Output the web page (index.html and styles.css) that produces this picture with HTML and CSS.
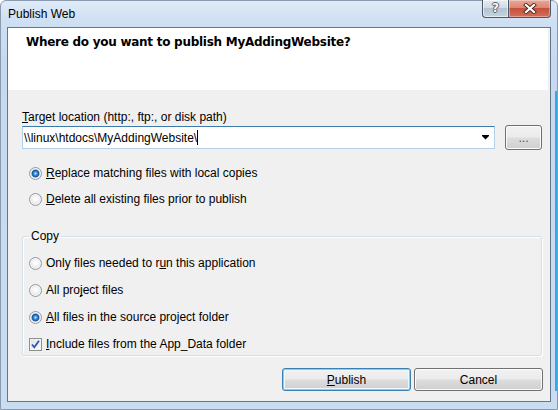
FILE: index.html
```html
<!DOCTYPE html>
<html lang="en">
<head>
<meta charset="utf-8">
<title>Publish Web</title>
<link rel="stylesheet" href="styles.css">
</head>
<body>
<div class="window">
  <div class="titlebar">
    <span class="title">Publish Web</span>
    <div class="caption-buttons">
      <div class="cb help"><span class="help-glyph">?</span></div>
      <div class="cb close">
        <svg width="14" height="11" viewBox="0 0 14 11">
          <path d="M3 2 L11 9 M11 2 L3 9" stroke="#4a2a24" stroke-width="4" stroke-linecap="square" fill="none"/>
          <path d="M3 2 L11 9 M11 2 L3 9" stroke="#ffffff" stroke-width="2.2" stroke-linecap="square" fill="none"/>
        </svg>
      </div>
    </div>
  </div>
  <div class="client">
    <div class="header">
      <h1 class="heading">Where do you want to publish MyAddingWebsite?</h1>
    </div>
    <div class="content">
      <label class="field-label"><u>T</u>arget location (http:, ftp:, or disk path)</label>
      <div class="location-row">
        <div class="combo">
          <span class="combo-text">\\linux\htdocs\MyAddingWebsite\</span><span class="caret"></span>
          <svg class="combo-arrow" width="7" height="5" viewBox="0 0 7 5">
            <path d="M0 0 H7 V1 L3.5 4.5 L0 1 Z" fill="#000"/>
          </svg>
        </div>
        <button class="btn browse">...</button>
      </div>
      <div class="options">
        <div class="option"><span class="radio checked"></span><span class="opt-text"><u>R</u>eplace matching files with local copies</span></div>
        <div class="option"><span class="radio"></span><span class="opt-text"><u>D</u>elete all existing files prior to publish</span></div>
      </div>
      <fieldset class="group">
        <legend class="group-title">Copy</legend>
        <div class="group-options">
          <div class="option"><span class="radio"></span><span class="opt-text">Only files needed to r<u>u</u>n this application</span></div>
          <div class="option"><span class="radio"></span><span class="opt-text">All pro<u>j</u>ect files</span></div>
          <div class="option"><span class="radio checked"></span><span class="opt-text"><u>A</u>ll files in the source project folder</span></div>
          <div class="option"><span class="checkbox">
            <svg width="11" height="11" viewBox="0 0 11 11"><path d="M2 5.5 L4.3 8.3 L9 1.8" stroke="#3057b0" stroke-width="1.8" fill="none"/></svg>
          </span><span class="opt-text"><u>I</u>nclude files from the App_Data folder</span></div>
        </div>
      </fieldset>
      <div class="actions">
        <button class="btn primary"><u>P</u>ublish</button>
        <button class="btn">Cancel</button>
      </div>
    </div>
  </div>
</div>
</body>
</html>
```
FILE: styles.css
```css
* { box-sizing: border-box; }
html, body { margin: 0; padding: 0; }
body {
  width: 558px;
  height: 410px;
  overflow: hidden;
  font-family: "Liberation Sans", Arial, sans-serif;
  font-size: 12px;
  color: #000;
  background: #ffffff;
}
u { text-decoration-skip-ink: none; }
.window {
  width: 558px;
  height: 410px;
  display: flex;
  flex-direction: column;
  border: 1px solid #8a9bb0;
  border-radius: 6px 6px 0 0;
  padding: 0 6px 7px 6px;
  background:
    linear-gradient(#35a9e6, #35a9e6) right 0 top 90px / 2px 300px no-repeat,
    linear-gradient(180deg, #dfeaf7 0, #cfe0f3 20px, #c6d9ef 60px, #c9dcf0 100%);
}
.titlebar {
  height: 26px;
  flex: none;
  display: flex;
  align-items: flex-start;
}
.title {
  align-self: center;
  padding-left: 1px;
  margin-top: -1px;
  font-size: 12px;
  color: #000;
}
.caption-buttons {
  margin-left: auto;
  margin-right: 0;
  margin-top: -1px;
  display: flex;
  height: 18px;
}
.cb {
  height: 18px;
  border: 1px solid #4b5867;
  border-top: 0;
  display: flex;
  align-items: center;
  justify-content: center;
}
.help {
  width: 26px;
  border-right: 0;
  border-radius: 0 0 0 4px;
  background: linear-gradient(180deg, #e5ebf2 0, #d2dbe6 45%, #b4c2d2 50%, #c6d3e1 100%);
  box-shadow: inset 0 0 0 1px rgba(255,255,255,0.55);
}
.help-glyph {
  font-family: "DejaVu Sans", sans-serif;
  font-weight: bold;
  font-size: 12px;
  color: #f4f6f8;
  line-height: 1;
  margin-top: -1px;
  text-shadow: 1px 0 0 #59636e, -1px 0 0 #59636e, 0 1px 0 #59636e, 0 -1px 0 #59636e;
}
.close {
  width: 43px;
  border-radius: 0 0 4px 0;
  background: linear-gradient(180deg, #e9a898 0, #dc8672 45%, #c7503c 50%, #d0705a 100%);
  box-shadow: inset 0 0 0 1px rgba(255,255,255,0.35);
}
.close svg { display: block; margin-top: -1px; }

.client {
  flex: 1;
  display: flex;
  flex-direction: column;
  border: 1px solid #66768a;
  background: #f0f0f0;
}
.header {
  height: 62px;
  flex: none;
  background: #ffffff;
  margin-right: 2px;
}
.heading {
  margin: 0;
  padding: 6px 0 0 18px;
  font-family: "DejaVu Sans", Verdana, sans-serif;
  font-weight: bold;
  font-size: 12px;
  letter-spacing: -0.27px;
  line-height: 16px;
}
.content {
  display: flex;
  flex-direction: column;
  padding: 0 7px 0 14px;
}
.field-label {
  display: block;
  margin-top: 19px;
  line-height: 16px;
}
.location-row {
  display: flex;
  align-items: center;
  height: 25px;
}
.combo {
  width: 473px;
  height: 23px;
  display: flex;
  align-items: center;
  background: #fff;
  border: 1px solid #b5cfe7;
  border-top-color: #3d7bad;
  padding-left: 1px;
  padding-right: 5px;
}
.combo-text { white-space: pre; }
.caret {
  width: 1px;
  height: 15px;
  background: #000;
  margin-left: 0;
}
.combo-arrow { margin-left: auto; display: block; }

.btn {
  font-family: "Liberation Sans", Arial, sans-serif;
  font-size: 12px;
  color: #000;
  border: 1px solid #707070;
  border-radius: 3px;
  background: linear-gradient(180deg, #f2f2f2 0, #ebebeb 48%, #dddddd 52%, #cfcfcf 100%);
  box-shadow: inset 0 0 0 1px #fbfbfb;
  padding: 0;
  height: 23px;
}
.browse {
  width: 37px;
  height: 25px;
  margin-left: 10px;
  color: #2d4a8a;
  letter-spacing: 0;
}
.options {
  display: flex;
  flex-direction: column;
  gap: 6px;
  margin-top: 13px;
}
.option {
  height: 20px;
  display: flex;
  align-items: center;
  padding-left: 7px;
}
.opt-text { margin-left: 4px; line-height: 16px; }
.radio {
  width: 13px;
  height: 13px;
  flex: none;
  border-radius: 50%;
  border: 1px solid #8e9aa6;
  background: radial-gradient(circle at 50% 45%, #ffffff 0, #f4f4f4 3px, #dcdcdc 6px);
  box-shadow: inset 0 0 0 1px #f7f7f7;
}
.radio.checked {
  background: radial-gradient(circle at 50% 50%, #c9ecff 0, #56aaf0 1.2px, #2d77c6 2.4px, #1a4f8e 3.4px, #b8cde2 4.2px, #e9eef3 5.5px);
}
.checkbox {
  width: 13px;
  height: 13px;
  flex: none;
  border: 1px solid #8e8f8f;
  background: linear-gradient(135deg, #dcdfe4 0, #f2f3f5 60%, #fbfbfb 100%);
  box-shadow: inset 0 0 0 1px #f4f4f4;
  display: flex;
  align-items: center;
  justify-content: center;
}
.checkbox svg { display: block; }

.group {
  margin: 19px 1px 0 0;
  padding: 0 0 1px 6px;
  border: 1px solid #d5dfe5;
  border-radius: 3px;
  box-shadow: 1px 1px 0 #fff, inset 1px 1px 0 #fff;
  min-width: 0;
}
.group-title {
  padding: 0 2px;
  line-height: 16px;
}
.group-options {
  display: flex;
  flex-direction: column;
  gap: 7px;
  margin-top: 9px;
  margin-left: -7px;
}
.actions {
  display: flex;
  justify-content: flex-end;
  gap: 3px;
  margin-top: 12px;
}
.actions .btn { width: 129px; }
.btn.primary {
  border-color: #3c7fb1;
  box-shadow: inset 0 0 0 1px #7fd3f2, inset 0 0 0 2px #eef8fc;
}
```
